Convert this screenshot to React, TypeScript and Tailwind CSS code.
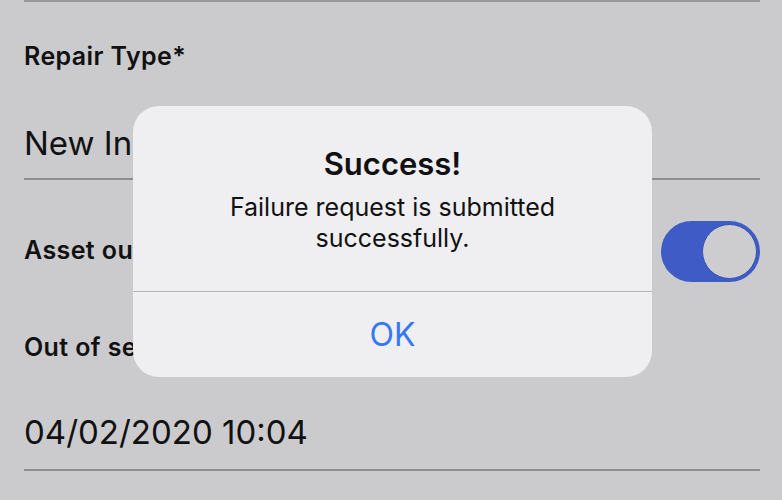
export default function App() {
  return (
    <div className="relative h-[500px] w-[782px] overflow-hidden bg-[#cbcbcd] font-['Inter','Liberation_Sans',sans-serif] text-[#111]">
      {/* Form behind the alert */}
      <div className="px-6">
        <div className="w-[736px] border-t-2 border-[#98989a]" />
        <div className="flex h-[109px] items-center text-[25px] font-semibold tracking-[0.4px]">Repair Type*</div>
        <div className="flex h-[69px] w-[736px] items-end border-b-2 border-[#8e8e90] pb-[15px] text-[33px] leading-[40px]">
          New Inspection
        </div>
        <div className="flex h-[142px] w-[736px] items-center justify-between">
          <span className="text-[25px] font-semibold tracking-[0.4px]">Asset out of service</span>
          <div className="flex h-[61px] w-[99px] items-center justify-end rounded-full bg-[#3f5bc6] pr-[3px]">
            <div className="h-[55px] w-[55px] rounded-full border border-[#3550b8] bg-[#cdcdcf]" />
          </div>
        </div>
        <div className="flex h-[52px] items-center text-[25px] font-semibold tracking-[0.4px]">Out of service date</div>
        <div className="flex h-[97px] w-[736px] items-end border-b-2 border-[#8e8e90] pb-[17px] text-[33px] leading-[40px]">
          04/02/2020 10:04
        </div>
      </div>

      {/* Alert */}
      <div className="absolute left-[133px] top-[106px] flex h-[271px] w-[519px] flex-col rounded-[26px] bg-[#efeff1]">
        <div className="flex h-[186px] flex-col items-center border-b border-[#b4b4b6] pt-[39px] text-center">
          <div className="text-[31px] font-semibold leading-[38px]">Success!</div>
          <div className="mt-[9px] text-[25px] leading-[31px]">
            Failure request is submitted
            <br />
            successfully.
          </div>
        </div>
        <div className="flex flex-1 items-center justify-center text-[32px] text-[#3478f6]">OK</div>
      </div>
    </div>
  )
}
